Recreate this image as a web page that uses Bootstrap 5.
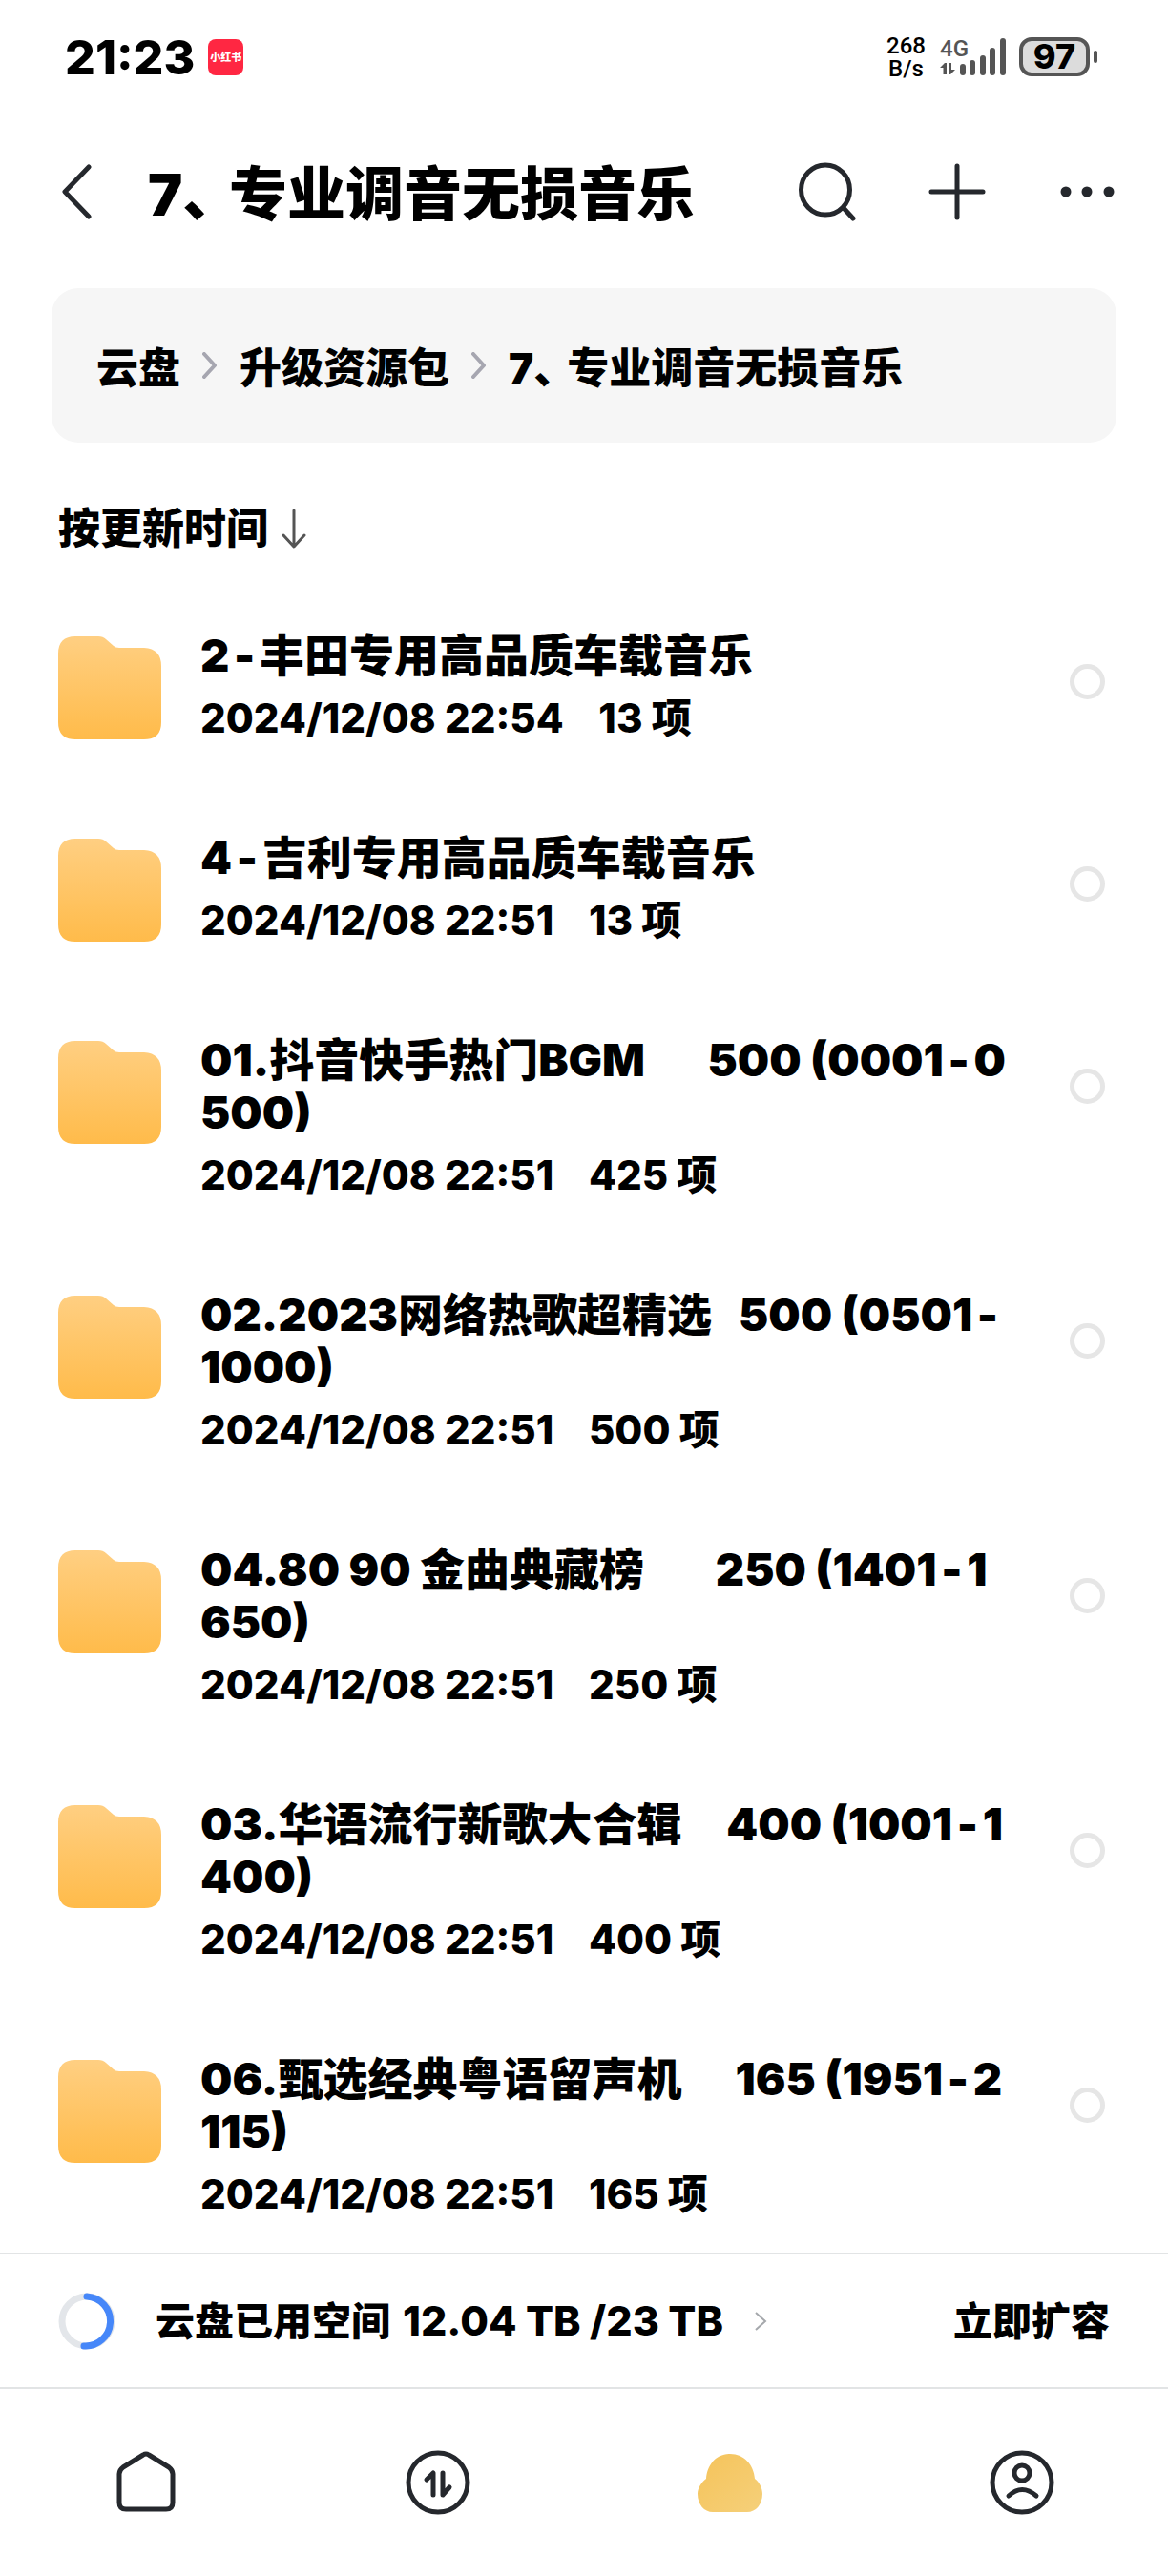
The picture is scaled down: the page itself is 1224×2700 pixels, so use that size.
<!DOCTYPE html>
<html lang="zh-CN">
<head>
<meta charset="utf-8">
<meta name="viewport" content="width=device-width, initial-scale=1">
<title>云盘</title>
<link href="https://cdn.jsdelivr.net/npm/bootstrap@5.3.0/dist/css/bootstrap.min.css" rel="stylesheet">
<style>
  body { font-family: Inter, "Noto Sans CJK SC", sans-serif; font-weight: 800; color: #000; background: #fff; }
  svg { display: block; flex: none; }
  .btn-plain { border: 0; background: none; padding: 0; color: #25282d; font-weight: inherit; }
  .dun { font-feature-settings: "halt"; margin-right: .3em; }
  .dash { padding: 0 .1em; }

  .status-bar { height: 119px; padding: 0 74px 0 68px; }
  .clock { font-size: 50px; line-height: 60px; }
  .app-tag { width: 37px; height: 38px; border-radius: 8px; background: #ff2742; color: #fff; font-size: 11px; line-height: 38px; margin-left: 14px; }
  .net-speed { font: 500 24px/24px Roboto, sans-serif; }
  .net-type { font: 500 24px/24px Roboto, sans-serif; }
  .signal { width: 69px; height: 39px; color: #555; margin: 0 14px 0 15px; overflow: visible; }
  .battery { width: 74px; height: 41px; border: 4px solid #555; border-radius: 13px; background: #dcdcdc; font-size: 36px; line-height: 33px; }
  .battery-tip { width: 4px; height: 13px; border-radius: 2px; background: #555; margin-left: 4px; }

  .title-bar { height: 164px; padding: 0 54px 0 64px; }
  .page-title { font-size: 61px; line-height: 72px; margin: 0 0 0 59px; padding-top: 6px; font-weight: 900; }
  .tools { gap: 75px; }

  .crumbs { margin: 19px 54px 0; padding: 0 47px; height: 162px; border-radius: 28px; background: #f6f6f6; font-size: 44px; line-height: 60px; font-weight: 900; }
  .crumbs a { display: block; color: #000; text-decoration: none; padding-top: 6px; }
  .crumbs ol { margin: 0; }
  .crumb-sep { margin: 0 23px; }

  .sort-bar { height: 178px; padding: 2px 61px 0; font-size: 44px; line-height: 60px; }
  .sort-bar .btn-plain { color: #000; font-weight: 900; gap: 14px; }

  .files { min-height: 0; overflow: hidden; padding: 17px 66px 0 61px; }
  .file { padding-bottom: 91px; }
  .folder { margin-top: 8px; }
  .file-text { margin-left: 41px; }
  .file-name { font-size: 47px; line-height: 55px; margin: 0 0 11px; white-space: pre-wrap; font-weight: 900; }
  .file-meta { font-size: 42px; line-height: 55px; white-space: pre; margin: 0; }
  .pick { appearance: none; flex: none; width: 37px; height: 37px; margin: 37px 0 0; border: 5px solid #e6e6e6; border-radius: 50%; background: #fff; }
  .pick:checked { background: #ffbb4a; }

  .storage { height: 143px; padding: 0 61px; border-top: 2px solid #e2e4e5; border-bottom: 2px solid #e2e4e5; font-size: 41px; line-height: 60px; background: #fff; }
  .storage .btn-plain { color: #000; }
  .used-label { margin: 0 24px 0 42px; }
  .used-size { font-size: 43px; }
  .tabs { height: 196px; background: #fff; }
</style>
</head>
<body>
<div class="d-flex flex-column vh-100">

  <div class="status-bar d-flex align-items-center flex-shrink-0">
    <span class="clock">21:23</span>
    <span class="app-tag text-center">小红书</span>
    <div class="net-speed text-center ms-auto">268<br>B/s</div>
    <svg class="signal" viewBox="0 0 69 39" fill="currentColor">
      <text class="net-type" x="0" y="19">4G</text>
      <path d="M0 31L5 26H7V38H3.500V31ZM9 26H12V33H16L11 38H9Z"/>
      <rect x="21" y="27" width="6" height="12" rx="3"/><rect x="31" y="23" width="6" height="16" rx="3"/><rect x="42" y="18" width="6" height="21" rx="3"/><rect x="52" y="10" width="6" height="29" rx="3"/><rect x="63" y="0" width="6" height="39" rx="3"/>
    </svg>
    <div class="battery text-center">97</div>
    <div class="battery-tip"></div>
  </div>

  <header class="title-bar d-flex align-items-center flex-shrink-0">
    <button class="btn-plain" aria-label="返回">
      <svg width="32" height="58" viewBox="0 0 32 58" fill="none" stroke="currentColor" stroke-width="5" stroke-linecap="round" stroke-linejoin="round"><path d="M29 3L4 29L29 55"/></svg>
    </button>
    <h1 class="page-title text-nowrap">7<span class="dun">、</span>专业调音无损音乐</h1>
    <div class="tools d-flex align-items-center ms-auto">
      <button class="btn-plain" aria-label="搜索">
        <svg width="62" height="62" viewBox="0 0 62 62" fill="none" stroke="currentColor" stroke-width="5" stroke-linecap="round"><ellipse cx="29" cy="29" rx="25.500" ry="26"/><path d="M48 48L58 59"/></svg>
      </button>
      <button class="btn-plain" aria-label="新建">
        <svg width="60" height="60" viewBox="0 0 60 60" fill="none" stroke="currentColor" stroke-width="5" stroke-linecap="round"><path d="M30 3V57M3 30H57"/></svg>
      </button>
      <button class="btn-plain" aria-label="更多">
        <svg width="62" height="60" viewBox="0 0 62 60" fill="currentColor"><circle cx="9" cy="30" r="5.500"/><circle cx="31" cy="30" r="5.500"/><circle cx="54" cy="30" r="5.500"/></svg>
      </button>
    </div>
  </header>

  <nav class="crumbs d-flex align-items-center flex-shrink-0" aria-label="路径">
    <ol class="list-unstyled d-flex align-items-center text-nowrap">
      <li><a href="#">云盘</a></li>
      <li class="crumb-sep"><svg width="16" height="28" viewBox="0 0 16 28" fill="none" stroke="#a6a6b0" stroke-width="4" stroke-linecap="round" stroke-linejoin="round"><path d="M2 2L13 14L2 26"/></svg></li>
      <li><a href="#">升级资源包</a></li>
      <li class="crumb-sep"><svg width="16" height="28" viewBox="0 0 16 28" fill="none" stroke="#a6a6b0" stroke-width="4" stroke-linecap="round" stroke-linejoin="round"><path d="M2 2L13 14L2 26"/></svg></li>
      <li><a href="#">7<span class="dun">、</span>专业调音无损音乐</a></li>
    </ol>
  </nav>

  <div class="sort-bar d-flex align-items-center flex-shrink-0">
    <button class="btn-plain d-flex align-items-center">按更新时间
      <svg width="26" height="42" viewBox="0 0 26 42" fill="none" stroke="#555" stroke-width="3" stroke-linecap="round" stroke-linejoin="round"><path d="M13 2V39M2 28L13 40L24 28"/></svg>
    </button>
  </div>

  <svg width="0" height="0" class="position-absolute" aria-hidden="true">
    <defs>
      <linearGradient id="gold" x1="0" y1="0" x2="0" y2="1"><stop offset="0" stop-color="#ffcf82"/><stop offset="1" stop-color="#ffbb4a"/></linearGradient>
      <symbol id="folder" viewBox="0 0 108 108"><path fill="url(#gold)" d="M18 0H42Q47 0 50 3L58 10Q60 12 64 12H90Q108 13 108 31V90Q108 108 90 108H18Q0 108 0 90V18Q0 0 18 0Z"/></symbol>
    </defs>
  </svg>

  <main class="files flex-grow-1">
    <div class="file d-flex align-items-start">
      <svg class="folder" width="108" height="108"><use href="#folder"/></svg>
      <div class="file-text flex-grow-1"><label class="file-name d-block" for="f1">2<span class="dash">-</span>丰田专用高品质车载音乐</label><p class="file-meta">2024/12/08 22:54    13 项</p></div>
      <input class="pick" type="checkbox" id="f1">
    </div>
    <div class="file d-flex align-items-start">
      <svg class="folder" width="108" height="108"><use href="#folder"/></svg>
      <div class="file-text flex-grow-1"><label class="file-name d-block" for="f2">4<span class="dash">-</span>吉利专用高品质车载音乐</label><p class="file-meta">2024/12/08 22:51    13 项</p></div>
      <input class="pick" type="checkbox" id="f2">
    </div>
    <div class="file d-flex align-items-start">
      <svg class="folder" width="108" height="108"><use href="#folder"/></svg>
      <div class="file-text flex-grow-1"><label class="file-name d-block" for="f3">01.抖音快手热门BGM       500 (0001<span class="dash">-</span>0<br>500)</label><p class="file-meta">2024/12/08 22:51    425 项</p></div>
      <input class="pick" type="checkbox" id="f3">
    </div>
    <div class="file d-flex align-items-start">
      <svg class="folder" width="108" height="108"><use href="#folder"/></svg>
      <div class="file-text flex-grow-1"><label class="file-name d-block" for="f4">02.2023网络热歌超精选   500 (0501<span class="dash">-</span><br>1000)</label><p class="file-meta">2024/12/08 22:51    500 项</p></div>
      <input class="pick" type="checkbox" id="f4">
    </div>
    <div class="file d-flex align-items-start">
      <svg class="folder" width="108" height="108"><use href="#folder"/></svg>
      <div class="file-text flex-grow-1"><label class="file-name d-block" for="f5">04.80 90 金曲典藏榜        250 (1401<span class="dash">-</span>1<br>650)</label><p class="file-meta">2024/12/08 22:51    250 项</p></div>
      <input class="pick" type="checkbox" id="f5">
    </div>
    <div class="file d-flex align-items-start">
      <svg class="folder" width="108" height="108"><use href="#folder"/></svg>
      <div class="file-text flex-grow-1"><label class="file-name d-block" for="f6">03.华语流行新歌大合辑     400 (1001<span class="dash">-</span>1<br>400)</label><p class="file-meta">2024/12/08 22:51    400 项</p></div>
      <input class="pick" type="checkbox" id="f6">
    </div>
    <div class="file d-flex align-items-start">
      <svg class="folder" width="108" height="108"><use href="#folder"/></svg>
      <div class="file-text flex-grow-1"><label class="file-name d-block" for="f7">06.甄选经典粤语留声机      165 (1951<span class="dash">-</span>2<br>115)</label><p class="file-meta">2024/12/08 22:51    165 项</p></div>
      <input class="pick" type="checkbox" id="f7">
    </div>
  </main>

  <div class="storage d-flex align-items-center justify-content-between flex-shrink-0">
    <button class="btn-plain d-flex align-items-center text-nowrap">
      <svg width="60" height="60" viewBox="0 0 60 60" fill="none" stroke-width="7" stroke-linecap="round"><circle cx="30" cy="30" r="26" stroke="#e3e6ea"/><path d="M30 4A26 26 0 1 1 27 56" stroke="#4687f9"/></svg>
      <span class="used-label">云盘已用空间 <span class="used-size ms-1">12.04 TB /23 TB</span></span>
      <svg width="30" height="20" viewBox="0 0 30 20" fill="none" stroke="#a5a8ac" stroke-width="2"><path d="M10 1L20 10L10 19"/></svg>
    </button>
    <button class="btn-plain text-nowrap">立即扩容</button>
  </div>

  <nav class="tabs row g-0 flex-shrink-0">
    <div class="col d-flex justify-content-center align-items-center">
      <button class="btn-plain" aria-label="首页"><svg width="70" height="70" viewBox="0 0 70 70" fill="none" stroke="#25282d" stroke-width="5" stroke-linejoin="round"><path d="M32 6Q35 4 38 6L59 19Q63 22 63 26V56Q63 63 56 63H14Q7 63 7 56V26Q7 22 11 19Z"/></svg></button>
    </div>
    <div class="col d-flex justify-content-center align-items-center">
      <button class="btn-plain" aria-label="传输"><svg width="70" height="70" viewBox="0 0 70 70" fill="none" stroke="#25282d" stroke-width="5" stroke-linecap="round" stroke-linejoin="round"><circle cx="35" cy="35" r="31"/><path d="M23 32L30 25V48M40 25V48L47 40"/></svg></button>
    </div>
    <div class="col d-flex justify-content-center align-items-center">
      <button class="btn-plain" aria-label="云盘"><svg width="70" height="70" viewBox="0 0 70 70"><defs><linearGradient id="cloud" x1="0" y1="0" x2="1" y2="1"><stop offset="0" stop-color="#f5c35a"/><stop offset="1" stop-color="#f5d07a"/></linearGradient></defs><path fill="url(#cloud)" d="M35 5C50 5 60 17 61 31C66 35 69 41 69 47C69 58 62 66 53 66H17C8 66 1 58 1 47C1 41 5 35 10 31C11 17 20 5 35 5Z"/></svg></button>
    </div>
    <div class="col d-flex justify-content-center align-items-center">
      <button class="btn-plain" aria-label="我的"><svg width="70" height="70" viewBox="0 0 70 70" fill="none" stroke="#25282d" stroke-width="5" stroke-linecap="round"><circle cx="35" cy="35" r="31"/><circle cx="35" cy="25" r="8"/><path d="M21 49Q35 36 50 49"/></svg></button>
    </div>
  </nav>
</div>
<script src="https://cdn.jsdelivr.net/npm/bootstrap@5.3.0/dist/js/bootstrap.bundle.min.js"></script>
</body>
</html>
